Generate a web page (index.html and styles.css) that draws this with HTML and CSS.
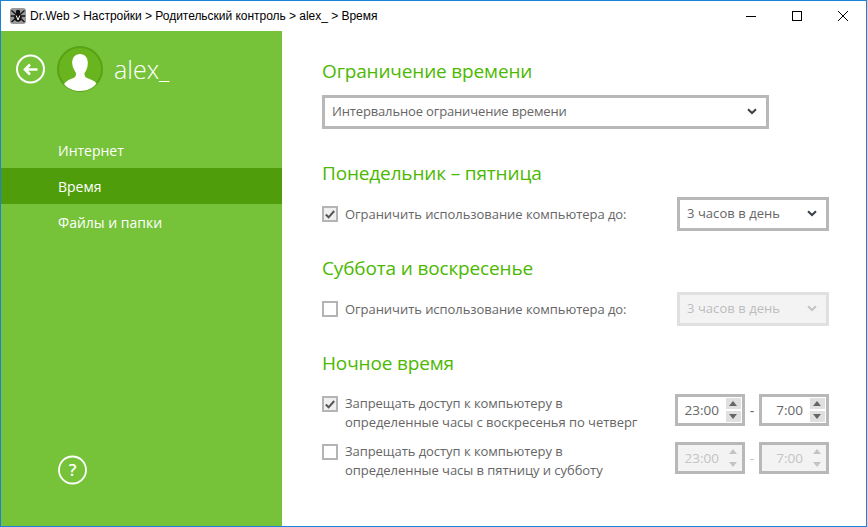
FILE: index.html
```html
<!DOCTYPE html>
<html lang="ru">
<head>
<meta charset="utf-8">
<title>Dr.Web</title>
<link rel="stylesheet" href="styles.css">
</head>
<body>
<div class="window">
  <header class="titlebar">
    <svg class="logo" width="16" height="16" viewBox="0 0 16 16"><rect width="16" height="16" rx="3" fill="#9a9a9a"/><path d="M1.500 2.500 5.500 6M14.500 2.500 10.500 6M.8 8h4M15.200 8h-4M1.500 14 5.500 10.500M14.500 14 10.500 10.500" stroke="#111" stroke-width="1.300" fill="none"/><ellipse cx="8" cy="9.200" rx="3.700" ry="4.600" fill="#111"/><circle cx="8" cy="4" r="2.200" fill="#111"/><path d="M6.200 7.500 8 12l1.800-4.500" stroke="#fff" stroke-width="1" fill="none"/></svg>
    <span class="crumbs">Dr.Web &gt; Настройки &gt; Родительский контроль &gt; alex_ &gt; Время</span>
    <div class="controls">
      <svg width="46" height="30" viewBox="0 0 46 30"><path d="M18 15.500h10" stroke="#000"/></svg>
      <svg width="46" height="30" viewBox="0 0 46 30"><rect x="18.500" y="10.500" width="9" height="9" fill="none" stroke="#000"/></svg>
      <svg width="46" height="30" viewBox="0 0 46 30"><path d="M18 10l10 10M28 10 18 20" stroke="#000" fill="none"/></svg>
    </div>
  </header>
  <div class="body">
    <aside class="sidebar">
      <div class="user">
        <svg class="back" width="30" height="30" viewBox="0 0 30 30"><circle cx="14.500" cy="15" r="13.500" fill="none" stroke="#fff" stroke-width="2"/><path d="M21.500 15.500H9.500M14 10.500 9 15.500l5 5" fill="none" stroke="#fff" stroke-width="2.600"/></svg>
        <svg class="avatar" width="46" height="46" viewBox="0 0 46 46"><circle cx="23" cy="23" r="22" fill="#68b51f" stroke="#58a213" stroke-width="2"/><path d="M23 8c5 0 7.800 3.500 7.800 9 0 4-1.300 7.500-3.300 10-.2 2.500.4 4 2.500 5 3.500 1.500 7.500 2.500 9.500 5.500-3.800 4.800-9.500 7.500-16.500 7.500s-12.700-2.700-16-7c2-3.300 6-4.500 9.500-6 2-1 2.700-2.500 2.500-5C17.500 24.500 15.200 21 15.200 17c0-5.500 2.800-9 7.800-9z" fill="#fff"/></svg>
        <span class="username">alex_</span>
      </div>
      <nav class="nav">
        <a class="nav-item">Интернет</a>
        <a class="nav-item active">Время</a>
        <a class="nav-item">Файлы и папки</a>
      </nav>
      <svg class="help" width="30" height="30" viewBox="0 0 30 30"><circle cx="14.500" cy="15" r="13.500" fill="none" stroke="#fff" stroke-width="1.800"/><text x="14.500" y="21" text-anchor="middle" class="help-mark">?</text></svg>
    </aside>
    <main class="content">
      <section class="group">
        <h2>Ограничение времени</h2>
        <div class="select wide"><span>Интервальное ограничение времени</span><svg class="chev" width="10" height="7" viewBox="0 0 10 7"><path d="M1 1.200 5 5l4-3.800" fill="none" stroke="#3a3f48" stroke-width="2"/></svg></div>
      </section>
      <section class="group">
        <h2>Понедельник – пятница</h2>
        <div class="row">
          <span class="check on"><svg width="10" height="9" viewBox="0 0 10 9"><path d="M.8 4.500 3.600 7.300 9.200 1" fill="none" stroke="#555" stroke-width="2"/></svg></span>
          <span class="label">Ограничить использование компьютера до:</span>
          <div class="select short"><span>3 часов в день</span><svg class="chev" width="10" height="7" viewBox="0 0 10 7"><path d="M1 1.200 5 5l4-3.800" fill="none" stroke="#3a3f48" stroke-width="2"/></svg></div>
        </div>
      </section>
      <section class="group">
        <h2>Суббота и воскресенье</h2>
        <div class="row">
          <span class="check"></span>
          <span class="label">Ограничить использование компьютера до:</span>
          <div class="select short disabled"><span>3 часов в день</span><svg class="chev" width="10" height="7" viewBox="0 0 10 7"><path d="M1 1.200 5 5l4-3.800" fill="none" stroke="#c4c4c4" stroke-width="2"/></svg></div>
        </div>
      </section>
      <section class="group">
        <h2>Ночное время</h2>
        <div class="row night">
          <span class="check on"><svg width="10" height="9" viewBox="0 0 10 9"><path d="M.8 4.500 3.600 7.300 9.200 1" fill="none" stroke="#555" stroke-width="2"/></svg></span>
          <span class="label">Запрещать доступ к компьютеру в<br>определенные часы с воскресенья по четверг</span>
          <div class="times">
            <div class="spin"><span class="val">23:00</span><div class="arrows"><i class="up"></i><i class="down"></i></div></div>
            <span class="dash">-</span>
            <div class="spin"><span class="val">7:00</span><div class="arrows"><i class="up"></i><i class="down"></i></div></div>
          </div>
        </div>
        <div class="row night">
          <span class="check"></span>
          <span class="label">Запрещать доступ к компьютеру в<br>определенные часы в пятницу и субботу</span>
          <div class="times disabled">
            <div class="spin"><span class="val">23:00</span><div class="arrows"><i class="up"></i><i class="down"></i></div></div>
            <span class="dash">-</span>
            <div class="spin"><span class="val">7:00</span><div class="arrows"><i class="up"></i><i class="down"></i></div></div>
          </div>
        </div>
      </section>
    </main>
  </div>
</div>
</body>
</html>
```
FILE: styles.css
```css
* { box-sizing: border-box; }
html, body { margin: 0; height: 100%; background: #fff; overflow: hidden; }
body { font-family: "Open Sans", "Noto Sans", sans-serif; color: #666; }
.window { width: 867px; height: 527px; border: 1px solid #1883d7; display: flex; flex-direction: column; }
.titlebar { height: 30px; display: flex; align-items: center; padding-left: 9px; flex: none; }
.logo { flex: none; }
.crumbs { margin-left: 4px; font-family: "Liberation Sans", sans-serif; font-size: 12px; letter-spacing: -.03px; color: #000; }
.controls { margin-left: auto; display: flex; }
.controls svg { display: block; }
.body { flex: 1; display: flex; min-height: 0; }
.sidebar { width: 281px; flex: none; background: #76c33a; display: flex; flex-direction: column; }
.user { display: flex; align-items: center; padding: 15px 0 0 15px; height: 61px; }
.back { flex: none; }
.avatar { flex: none; margin-left: 11px; }
.username { margin-left: 11px; font-family: "Open Sans", sans-serif; font-weight: 300; font-size: 25px; color: #fff; line-height: 46px; }
.nav { margin-top: 40px; display: flex; flex-direction: column; }
.nav-item { height: 36px; line-height: 38px; padding-left: 57px; font-size: 14px; color: #fff; }
.nav-item.active { background: #4f9d0b; }
.help { margin: auto 0 41px 57px; flex: none; }
.help-mark { font: 600 17px "Open Sans", sans-serif; fill: #fff; }
.content { flex: 1; padding: 27px 37px 0 40px; }
.group { display: flex; flex-direction: column; }
.group + .group { margin-top: 31px; }
.group:nth-child(3), .group:nth-child(4) { margin-top: 24px; }
h2 { margin: 0; font-weight: 400; font-size: 19px; letter-spacing: -.15px; line-height: 27px; color: #4cb800; }
.select { display: flex; align-items: center; justify-content: space-between; height: 34px; border: 3px solid #b8b8b8; background: #fff; font-size: 13px; color: #666; padding-bottom: 2px; }
.wide { width: 447px; margin-top: 10px; padding-left: 7px; padding-right: 9px; letter-spacing: -.15px; }
.short { width: 152px; margin-left: auto; padding-left: 7px; padding-right: 9px; letter-spacing: .05px; }
.select.disabled { border-color: #e0e0e0; background: #f3f3f3; color: #bdbdbd; }
.row { display: flex; align-items: center; margin-top: 10px; }
.check { flex: none; width: 16px; height: 16px; border: 2px solid #b4b4b4; display: flex; align-items: center; justify-content: center; }
.check.on { background: #f0f0f0; }
.label { margin-left: 7px; font-size: 13px; letter-spacing: -.05px; line-height: 19px; color: #666; white-space: nowrap; }
.night { margin-top: 17px; align-items: flex-start; height: 32px; }
.night .check { margin-top: 2px; }
.night + .night { margin-top: 16px; }
.times { margin-left: auto; display: flex; align-items: center; }
.spin { width: 70px; height: 32px; border: 3px solid #b8b8b8; display: flex; align-items: center; justify-content: space-between; padding: 0 1px 0 5px; background: #fff; }
.val { flex: 1; text-align: right; padding-right: 7px; font-size: 13.500px; color: #666; }
.arrows { width: 15px; height: 24px; display: flex; flex-direction: column; justify-content: space-between; }
.arrows i { display: block; height: 11px; background: #e0e0e0; position: relative; }
.arrows i::after { content: ""; position: absolute; left: 3px; border-left: 4px solid transparent; border-right: 4px solid transparent; }
.up::after { top: 3px; border-bottom: 5px solid #666; }
.down::after { top: 3px; border-top: 5px solid #666; }
.dash { width: 14px; text-align: center; font-size: 14px; color: #666; }
.disabled .spin { background: #f3f3f3; }
.disabled .val, .disabled .dash { color: #c4c4c4; }
.disabled .arrows i { background: transparent; }
.disabled .up::after { border-bottom-color: #c4c4c4; }
.disabled .down::after { border-top-color: #c4c4c4; }
```
